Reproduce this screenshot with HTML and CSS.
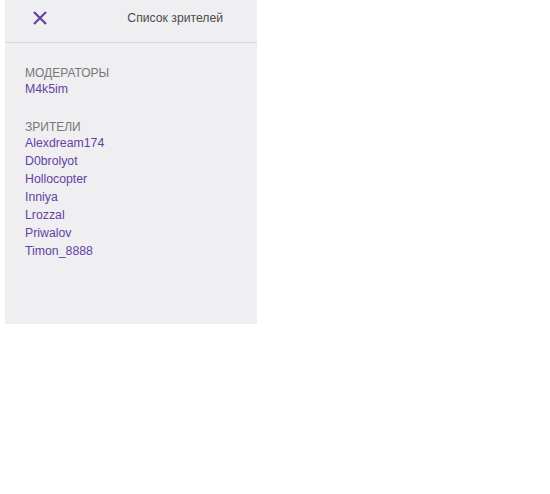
FILE: index.html
```html
<!DOCTYPE html>
<html>
<head>
<meta charset="utf-8">
<link rel="stylesheet" href="styles.css">
</head>
<body>
<div class="panel">
  <div class="header">
    <svg class="close" width="16" height="16" viewBox="0 0 16 16"><path d="M2 2 L14 14 M14 2 L2 14" stroke="#6441a4" stroke-width="2.2" fill="none"/></svg>
    <span class="title">Список зрителей</span>
  </div>
  <div class="content">
    <div class="group">
      <div class="label">МОДЕРАТОРЫ</div>
      <ul class="names">
        <li>M4k5im</li>
      </ul>
    </div>
    <div class="group">
      <div class="label">ЗРИТЕЛИ</div>
      <ul class="names">
        <li>Alexdream174</li>
        <li>D0brolyot</li>
        <li>Hollocopter</li>
        <li>Inniya</li>
        <li>Lrozzal</li>
        <li>Priwalov</li>
        <li>Timon_8888</li>
      </ul>
    </div>
  </div>
</div>
</body>
</html>
```
FILE: styles.css
```css
html, body {
  margin: 0;
  padding: 0;
  background: #fff;
  font-family: "Liberation Sans", Arial, sans-serif;
}
.panel {
  margin-left: 5px;
  width: 252px;
  height: 324px;
  background: #efeef1;
  box-sizing: border-box;
}
.header {
  height: 43px;
  box-sizing: border-box;
  border-bottom: 1px solid #dad8de;
  display: flex;
  align-items: center;
  justify-content: space-between;
  padding: 0 34px 0 27px;
}
.close {
  display: block;
  margin-top: -6px;
}
.title {
  font-size: 12.2px;
  color: #4b4b4b;
  margin-top: -6px;
}
.content {
  padding: 22px 20px 0;
}
.group + .group {
  margin-top: 21px;
}
.label {
  font-size: 12px;
  line-height: 16px;
  color: #777;
}
.names {
  list-style: none;
  margin: 0;
  padding: 0;
}
.names li {
  font-size: 12.3px;
  line-height: 18px;
  color: #6441a4;
}
.names li:first-child {
  margin-top: -1px;
}
```
